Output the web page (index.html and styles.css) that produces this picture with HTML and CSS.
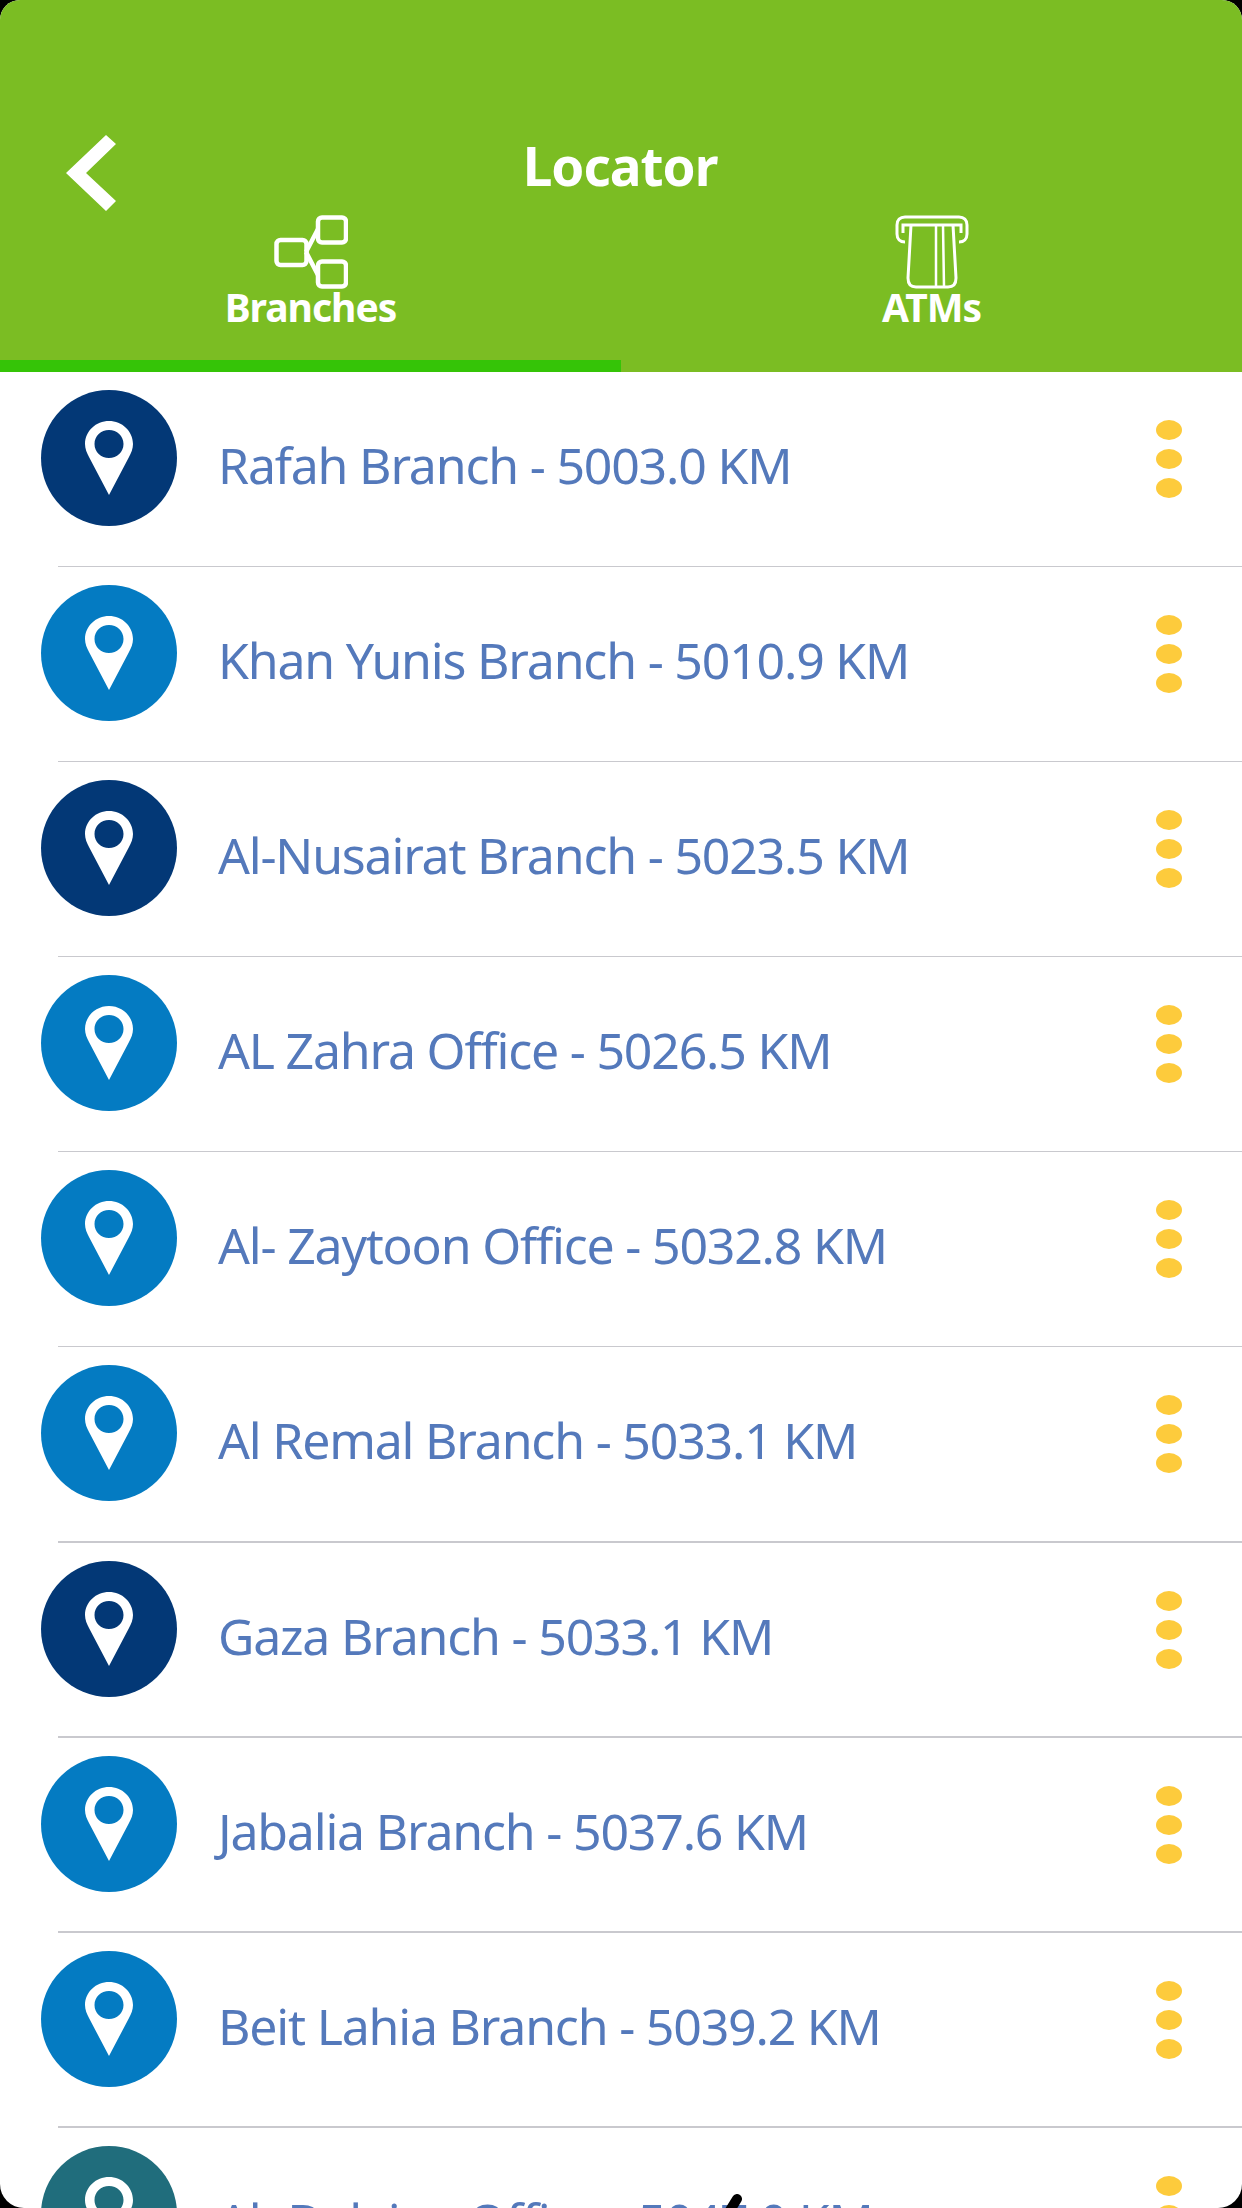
FILE: index.html
```html
<!DOCTYPE html>
<html lang="en">
<head>
    <meta charset="UTF-8">
    <meta name="viewport" content="width=device-width, initial-scale=1.0">
    <title>Locator</title>
    <link rel="stylesheet" href="styles.css">
</head>
<body>
    <svg class="defs" width="0" height="0">
        <symbol id="pin" viewBox="0 0 48 74" preserveAspectRatio="none">
            <path fill="#fff" fill-rule="evenodd" d="M24 0C11 0 0 10 0 23c0 5 2 9 4 13l20 38 20-38c2-4 4-8 4-13C48 10 37 0 24 0zm0 9c8 0 14.500 6 14.500 14S32 37 24 37 9.500 31 9.500 23 16 9 24 9z"/>
        </symbol>
    </svg>
    <div class="screen">
        <header class="header">
            <div class="title-row">
                <svg class="back" viewBox="0 0 50 76"><path fill="#fff" d="M40 0l10 9-30 29 30 28-10 10L0 38z"/></svg>
                <h1 class="title">Locator</h1>
            </div>
            <div class="tabs">
                <div class="tab active">
                    <svg class="tab-icon" viewBox="0 0 74 74" fill="none" stroke="#fff" stroke-width="4.500">
                        <rect x="2.500" y="25" width="30" height="25" rx="4"/>
                        <rect x="44" y="2.500" width="28" height="25" rx="4"/>
                        <rect x="44" y="46.500" width="28" height="25" rx="4"/>
                        <path d="M32 37l12-23M32 37l12 23"/>
                    </svg>
                    <span class="tab-label">Branches</span>
                </div>
                <div class="tab">
                    <svg class="tab-icon" viewBox="0 0 74 74" fill="none" stroke="#fff" stroke-width="2.500">
                        <path stroke-width="3" d="M10 27c-5 0-8-3-8-8V10c0-5 3-8 8-8h54c5 0 8 3 8 8v9c0 5-3 8-8 8"/>
                        <path stroke-width="3" d="M8 18v-8h58v8"/>
                        <path stroke-width="3" d="M16 10l-3 53c0 6 3 9 8 9h32c5 0 8-3 8-9l-3-53"/>
                        <path d="M41 10v62M48 10l1 62"/>
                    </svg>
                    <span class="tab-label">ATMs</span>
                </div>
            </div>
        </header>
        <ul class="list">
            <li class="row"><span class="badge navy"><svg class="pin"><use href="#pin"/></svg></span><span class="name">Rafah Branch - 5003.0 KM</span><span class="dots"><i></i><i></i><i></i></span></li>
            <li class="row"><span class="badge blue"><svg class="pin"><use href="#pin"/></svg></span><span class="name">Khan Yunis Branch - 5010.9 KM</span><span class="dots"><i></i><i></i><i></i></span></li>
            <li class="row"><span class="badge navy"><svg class="pin"><use href="#pin"/></svg></span><span class="name">Al-Nusairat Branch - 5023.5 KM</span><span class="dots"><i></i><i></i><i></i></span></li>
            <li class="row"><span class="badge blue"><svg class="pin"><use href="#pin"/></svg></span><span class="name">AL Zahra Office - 5026.5 KM</span><span class="dots"><i></i><i></i><i></i></span></li>
            <li class="row"><span class="badge blue"><svg class="pin"><use href="#pin"/></svg></span><span class="name">Al- Zaytoon Office - 5032.8 KM</span><span class="dots"><i></i><i></i><i></i></span></li>
            <li class="row"><span class="badge blue"><svg class="pin"><use href="#pin"/></svg></span><span class="name">Al Remal Branch - 5033.1 KM</span><span class="dots"><i></i><i></i><i></i></span></li>
            <li class="row"><span class="badge navy"><svg class="pin"><use href="#pin"/></svg></span><span class="name">Gaza Branch - 5033.1 KM</span><span class="dots"><i></i><i></i><i></i></span></li>
            <li class="row"><span class="badge blue"><svg class="pin"><use href="#pin"/></svg></span><span class="name">Jabalia Branch - 5037.6 KM</span><span class="dots"><i></i><i></i><i></i></span></li>
            <li class="row"><span class="badge blue"><svg class="pin"><use href="#pin"/></svg></span><span class="name">Beit Lahia Branch - 5039.2 KM</span><span class="dots"><i></i><i></i><i></i></span></li>
            <li class="row"><span class="badge teal"><svg class="pin"><use href="#pin"/></svg></span><span class="name">Al- Dalajan Office - 5047.0 KM</span><span class="dots"><i></i><i></i><i></i></span></li>
        </ul>
        <svg class="cursor" viewBox="0 0 20 14"><path fill="none" stroke="#000" stroke-width="10" stroke-linecap="round" d="M14 5L6 18"/></svg>
    </div>
</body>
</html>
```

FILE: styles.css
```css
html, body {
    margin: 0;
    padding: 0;
    background: #000;
}
.defs {
    position: absolute;
}
.screen {
    width: 1242px;
    height: 2208px;
    overflow: hidden;
    position: relative;
    background: #fff;
    border-radius: 20px 20px 24px 24px;
    font-family: "Noto Sans", "Open Sans", sans-serif;
}
.header {
    height: 372px;
    box-sizing: border-box;
    padding-top: 135px;
    background: #7bbd23;
    color: #fff;
}
.title-row {
    height: 76px;
    padding-left: 66px;
    position: relative;
    display: flex;
    align-items: center;
}
.back {
    width: 50px;
    height: 76px;
}
.title {
    position: absolute;
    left: -2px;
    right: 0;
    top: -7px;
    margin: 0;
    text-align: center;
    font-size: 53px;
    line-height: 76px;
    font-weight: 700;
    letter-spacing: -1px;
}
.tabs {
    display: flex;
    height: 161px;
    box-sizing: border-box;
    padding-top: 4px;
}
.tab {
    flex: 1;
    display: flex;
    flex-direction: column;
    align-items: center;
}
.tab.active {
    border-bottom: 12px solid #35c407;
}
.tab-icon {
    width: 74px;
    height: 74px;
    flex: none;
}
.tab-label {
    font-size: 39px;
    font-weight: 700;
    line-height: 42px;
    letter-spacing: -1px;
    margin-top: -3px;
}
.list {
    list-style: none;
    margin: 0;
    padding: 0;
}
.row {
    height: 195.100px;
    box-sizing: border-box;
    padding: 18px 60px 0 41px;
    display: flex;
    align-items: flex-start;
    position: relative;
}
.row::after {
    content: "";
    position: absolute;
    left: 58px;
    right: 0;
    bottom: 0;
    height: 1.500px;
    background: #c9c9ce;
}
.badge {
    width: 136px;
    height: 136px;
    border-radius: 50%;
    flex: none;
    display: flex;
    align-items: center;
    justify-content: center;
}
.navy { background: #033876; }
.blue { background: #047bc2; }
.teal { background: #206d7c; }
.pin {
    width: 48px;
    height: 74px;
}
.name {
    flex: 1;
    margin-left: 41px;
    padding-top: 7px;
    line-height: 136px;
    font-size: 50px;
    color: #5479bb;
    letter-spacing: -1.200px;
    white-space: nowrap;
}
.dots {
    display: flex;
    flex-direction: column;
    gap: 9px;
    padding-top: 30px;
}
.dots i {
    display: block;
    width: 26px;
    height: 20px;
    border-radius: 50%;
    background: #fdcb3c;
}
.cursor {
    position: absolute;
    left: 723px;
    top: 2194px;
    width: 20px;
    height: 14px;
}
```
